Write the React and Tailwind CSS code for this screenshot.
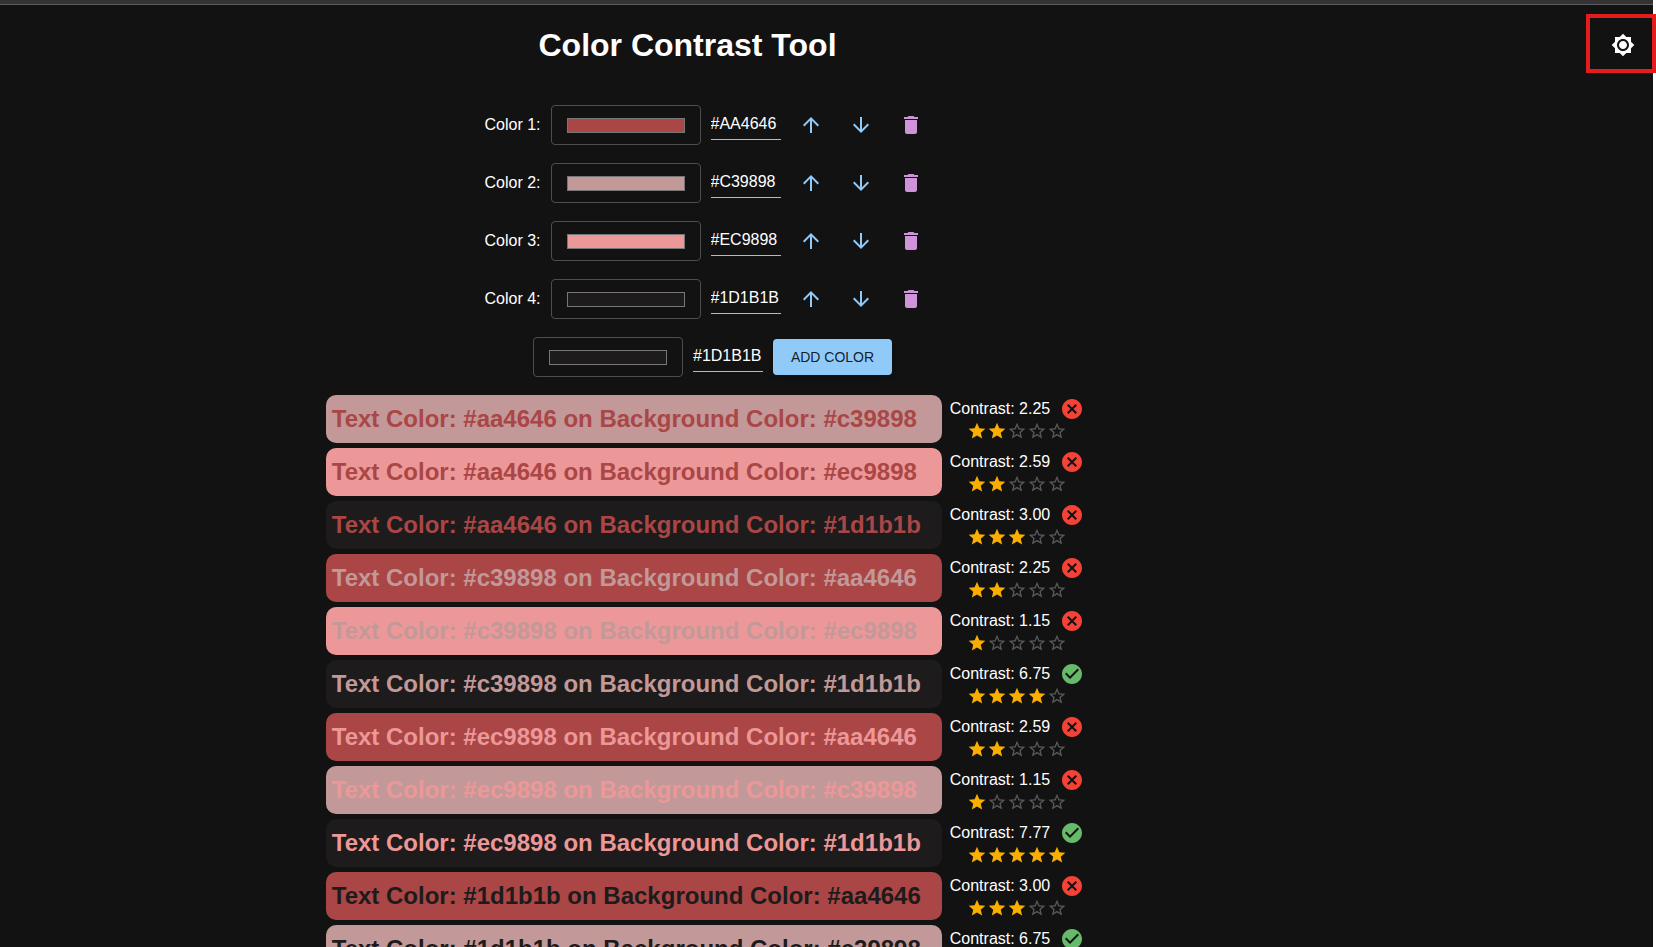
import { useState } from "react";
import {
  MdArrowDownward,
  MdArrowUpward,
  MdBrightness7,
  MdCancel,
  MdCheckCircle,
  MdDelete,
  MdStar,
  MdStarBorder,
} from "react-icons/md";

function luminance(hex) {
  const [r, g, b] = [1, 3, 5]
    .map((i) => parseInt(hex.slice(i, i + 2), 16) / 255)
    .map((c) => (c <= 0.03928 ? c / 12.92 : ((c + 0.055) / 1.055) ** 2.4));
  return 0.2126 * r + 0.7152 * g + 0.0722 * b;
}

function contrast(a, b) {
  const [hi, lo] = [luminance(a), luminance(b)].sort((x, y) => y - x);
  return (hi + 0.05) / (lo + 0.05);
}

function starCount(ratio) {
  if (ratio >= 7) return 5;
  if (ratio >= 4.5) return 4;
  if (ratio >= 3) return 3;
  if (ratio >= 2) return 2;
  return 1;
}

function ColorFields({ name, value, onChange }) {
  return (
    <>
      <div className="flex h-10 w-[150px] items-center justify-center rounded border border-[#4d4d4d]">
        <input
          type="color"
          aria-label={`${name} picker`}
          value={value}
          onChange={(e) => onChange(e.target.value)}
          className="h-[15px] w-[118px] cursor-pointer appearance-none bg-transparent p-0 [&::-webkit-color-swatch]:rounded-none [&::-webkit-color-swatch]:border [&::-webkit-color-swatch]:border-[#777777] [&::-webkit-color-swatch-wrapper]:p-0"
        />
      </div>
      <input
        type="text"
        aria-label={`${name} hex value`}
        value={value.toUpperCase()}
        onChange={(e) => onChange(e.target.value.toLowerCase())}
        className="h-[30px] w-[70px] border-b border-[#bababa] bg-transparent pb-0.5 text-base text-white outline-none"
      />
    </>
  );
}

function IconButton({ label, className, onClick, children }) {
  return (
    <button
      type="button"
      aria-label={label}
      onClick={onClick}
      className={`flex size-10 items-center justify-center rounded-full text-2xl ${className}`}
    >
      {children}
    </button>
  );
}

function PairRow({ text, background }) {
  const ratio = contrast(text, background);
  const stars = starCount(Number(ratio.toFixed(2)));
  const passes = ratio >= 4.5;
  return (
    <li className="flex items-center gap-2 pr-[5px]">
      <div
        className="flex h-12 w-[616px] items-center rounded-[10px] pl-1.5 text-2xl font-bold whitespace-nowrap"
        style={{ color: text, backgroundColor: background }}
      >
        Text Color: {text} on Background Color: {background}
      </div>
      <div className="flex flex-col items-center">
        <div className="flex h-6 items-center gap-2.5">
          <span>Contrast: {ratio.toFixed(2)}</span>
          {passes ? (
            <MdCheckCircle className="size-6 text-[#66bb6a]" />
          ) : (
            <MdCancel className="size-6 text-[#f44336]" />
          )}
        </div>
        <div className="flex" role="img" aria-label={`${stars} of 5 stars`}>
          {[1, 2, 3, 4, 5].map((n) =>
            n <= stars ? (
              <MdStar key={n} className="size-5 text-[#faaf00]" />
            ) : (
              <MdStarBorder key={n} className="size-5 text-[#595959]" />
            ),
          )}
        </div>
      </div>
    </li>
  );
}

export default function App() {
  const [colors, setColors] = useState(["#aa4646", "#c39898", "#ec9898", "#1d1b1b"]);
  const [draft, setDraft] = useState("#1d1b1b");

  const update = (i, value) => setColors(colors.map((c, j) => (j === i ? value : c)));
  const remove = (i) => setColors(colors.filter((_, j) => j !== i));
  const move = (i, step) => {
    const j = i + step;
    if (j < 0 || j >= colors.length) return;
    const next = [...colors];
    [next[i], next[j]] = [next[j], next[i]];
    setColors(next);
  };

  const pairs = colors.flatMap((text) =>
    colors.filter((bg) => bg !== text).map((background) => ({ text, background })),
  );

  return (
    <div className="relative h-screen overflow-hidden bg-white pr-[3px] font-['Liberation_Sans',Arial,sans-serif] text-base text-white">
      <div className="flex h-full flex-col bg-[#121212]">
        <div className="h-[5px] shrink-0 border-b border-[#5c5c5c] bg-[#333333]" />
        <div className="flex min-h-0 flex-1">
          <main className="flex flex-1 flex-col items-center overflow-y-auto [scrollbar-width:none]">
            <h1 className="mt-5 mr-10 text-[32px] leading-10 font-bold">Color Contrast Tool</h1>
            <ul className="mt-10 flex flex-col gap-[18px]">
              {colors.map((color, i) => (
                <li key={i} className="flex items-center gap-2.5">
                  <span>Color {i + 1}:</span>
                  <ColorFields
                    name={`Color ${i + 1}`}
                    value={color}
                    onChange={(value) => update(i, value)}
                  />
                  <IconButton label="Move up" className="text-[#90caf9]" onClick={() => move(i, -1)}>
                    <MdArrowUpward />
                  </IconButton>
                  <IconButton label="Move down" className="text-[#90caf9]" onClick={() => move(i, 1)}>
                    <MdArrowDownward />
                  </IconButton>
                  <IconButton label="Delete" className="text-[#ce93d8]" onClick={() => remove(i)}>
                    <MdDelete />
                  </IconButton>
                </li>
              ))}
            </ul>
            <div className="mt-[18px] ml-2.5 flex items-center gap-2.5">
              <ColorFields name="New color" value={draft} onChange={setDraft} />
              <button
                type="button"
                onClick={() => setColors([...colors, draft])}
                className="h-9 w-[119px] rounded bg-[#90caf9] text-sm text-black/87 uppercase shadow-md"
              >
                Add Color
              </button>
            </div>
            <ul className="mt-[18px] flex flex-col gap-[5px] pb-5">
              {pairs.map(({ text, background }) => (
                <PairRow key={`${text}-${background}`} text={text} background={background} />
              ))}
            </ul>
          </main>
          <aside className="flex w-[238px] justify-end pt-5 pr-2.5">
            <IconButton label="Toggle theme" className="text-white">
              <MdBrightness7 />
            </IconButton>
          </aside>
        </div>
      </div>
      <div className="pointer-events-none absolute top-3.5 right-0 h-[59px] w-[70px] border-4 border-[#e51c1c]" />
    </div>
  );
}
